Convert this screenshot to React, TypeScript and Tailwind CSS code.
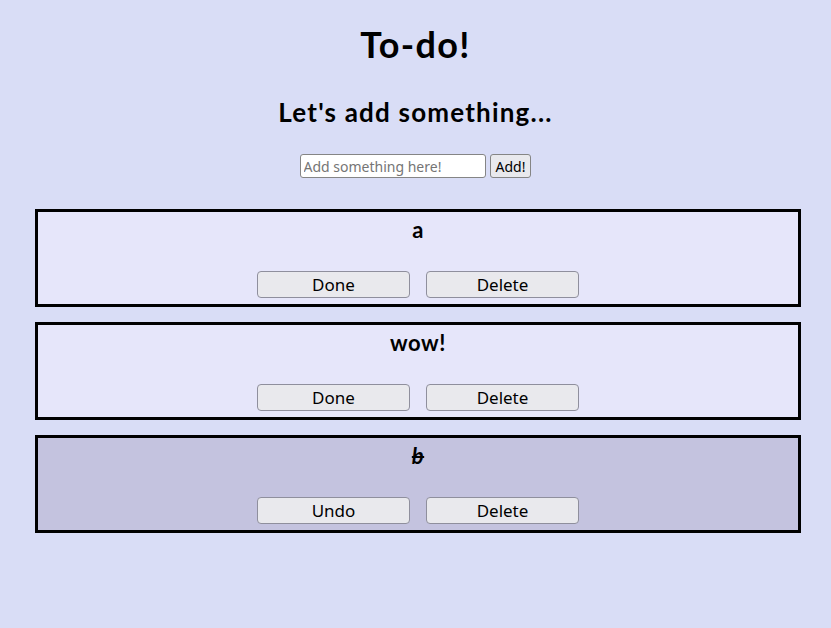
const todos = [
  { text: "a", done: false },
  { text: "wow!", done: false },
  { text: "b", done: true },
];

export default function App() {
  return (
    <div className="min-h-[628px] bg-[#d9ddf6] pt-[22px] font-['Lato','Noto_Sans',sans-serif] text-black">
      <h1 className="text-center text-[36px] font-bold leading-[44px] tracking-[1.3px]">To-do!</h1>
      <h2 className="mt-[29px] text-center text-[26px] font-bold leading-[34px] tracking-[1.2px]">Let's add something...</h2>

      <div className="mt-[25px] flex justify-center gap-[4px]">
        <input
          placeholder="Add something here!"
          className="h-[24px] w-[186px] rounded-[3px] border border-[#858585] bg-white px-[3px] font-['Noto_Sans',sans-serif] text-[14px] placeholder:text-[#757575]"
        />
        <button className="h-[24px] rounded-[3px] border border-[#858585] bg-[#e9e9ed] px-[5px] font-['Noto_Sans',sans-serif] text-[14px]">
          Add!
        </button>
      </div>

      <div className="mt-[31px] ml-[35px] flex w-[766px] flex-col gap-[15px]">
        {todos.map((t) => (
          <div
            key={t.text}
            className={`h-[98px] border-[3px] border-black pt-[2px] ${t.done ? "bg-[#c4c3df]" : "bg-[#e6e6fa]"}`}
          >
            <p className={`text-center text-[22px] font-bold leading-[32px] tracking-[0.5px] ${t.done ? "italic line-through" : ""}`}>
              {t.text}
            </p>
            <div className="mt-[25px] flex justify-center gap-[16px]">
              <button className="h-[27px] w-[153px] rounded-[4px] border border-[#8f8f9d] bg-[#e9e9ed] font-['Noto_Sans',sans-serif] text-[17px] leading-[24px]">
                {t.done ? "Undo" : "Done"}
              </button>
              <button className="h-[27px] w-[153px] rounded-[4px] border border-[#8f8f9d] bg-[#e9e9ed] font-['Noto_Sans',sans-serif] text-[17px] leading-[24px]">
                Delete
              </button>
            </div>
          </div>
        ))}
      </div>
    </div>
  );
}
